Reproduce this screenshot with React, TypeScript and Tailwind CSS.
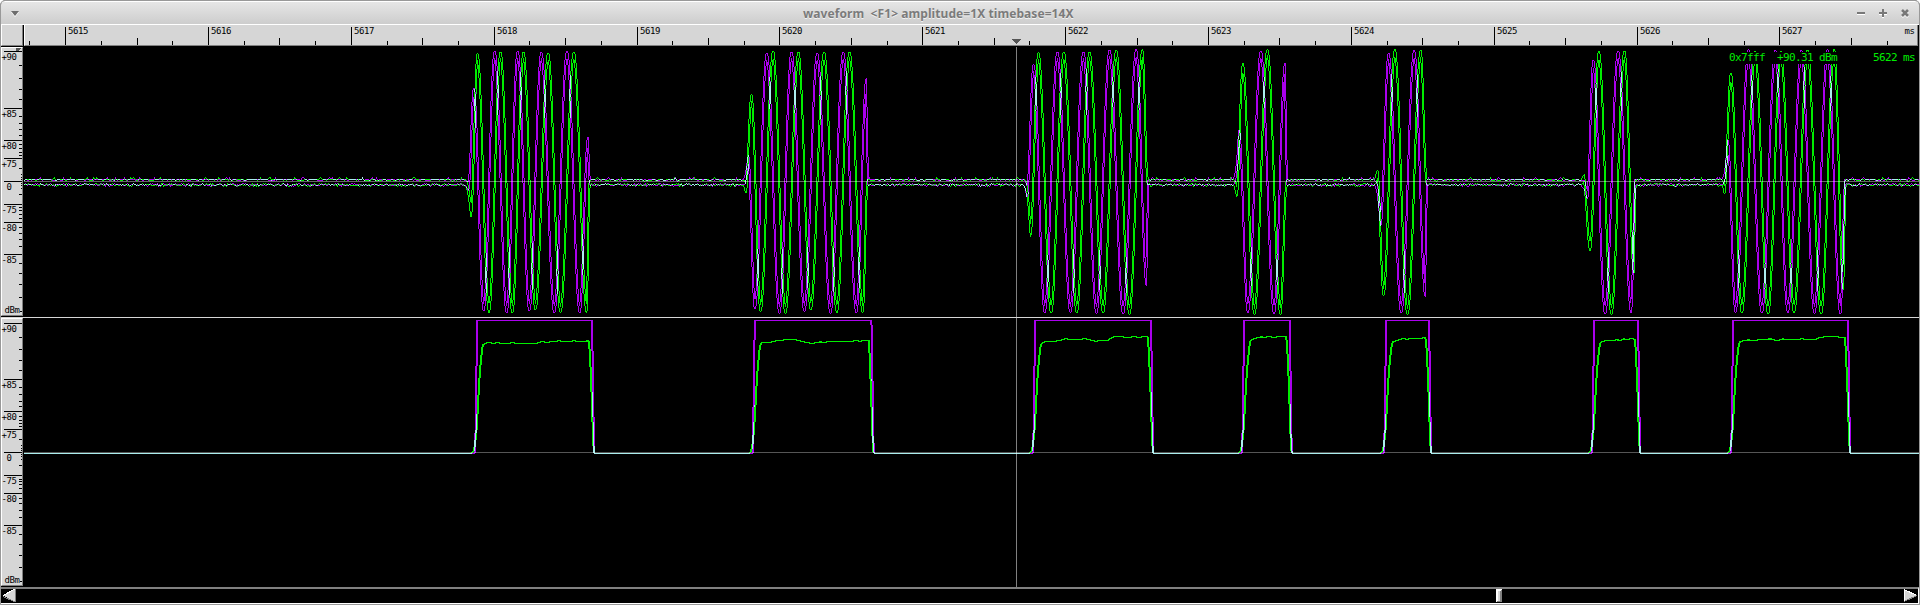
type Pt = [number, number];

const GREEN = '#00ee00';
const PURPLE = '#aa00ee';

interface Burst {
  start: number;
  end: number;
  purple: Pt[];
  green: Pt[];
}

// Turning points of both channels for each burst, in trace pixels.
const BURSTS: Burst[] = [
  {
    start: 463,
    end: 589.4,
    purple: [[468.5, 190], [473.7, 87.7], [483.7, 311], [494.7, 50.7], [506.7, 313], [517.7, 50.7], [529.3, 311], [541.3, 51.7], [554.3, 313], [567, 50.7], [579.7, 313], [588, 137]],
    green: [[471, 216.7], [477.5, 53.3], [489, 312.7], [500.5, 51.7], [512.3, 313], [523.5, 51.7], [535.4, 310], [548.2, 52.7], [560.5, 312.7], [573.8, 51.7], [586.7, 312.7]],
  },
  {
    start: 742,
    end: 867.5,
    purple: [[748.3, 155], [754.8, 309.3], [766.8, 52.7], [779.4, 313.3], [791.5, 51.7], [804.4, 311.7], [817.2, 52.7], [830.4, 313.3], [843.2, 51.7], [856.4, 313.3], [866.4, 78.3]],
    green: [[745.7, 193.3], [751.4, 94.3], [760.5, 311.7], [773.1, 50.7], [785.4, 313.3], [798.4, 51.7], [810.8, 310], [824.1, 51.7], [836.8, 312.7], [849.5, 51.7], [862.8, 312.7]],
  },
  {
    start: 1023,
    end: 1147.6,
    purple: [[1027, 196.7], [1033.5, 64.3], [1044.7, 312.7], [1057.4, 51.7], [1070.4, 312.7], [1083.4, 51.7], [1096.4, 313.3], [1109.5, 50], [1123.1, 314.3], [1136.2, 49.3], [1146.6, 286]],
    green: [[1030.4, 236.7], [1038.4, 52.3], [1051.1, 313.3], [1063.8, 51.7], [1076.8, 312.7], [1089.5, 51.7], [1103.1, 313.3], [1116.2, 50], [1129.4, 314.3], [1142.5, 49.3]],
  },
  {
    start: 1232,
    end: 1286.6,
    purple: [[1239, 130], [1247.8, 312.7], [1260.8, 50.7], [1274.1, 314], [1285.1, 63.3]],
    green: [[1236.7, 196.7], [1242.8, 63.3], [1254.4, 314.7], [1267.4, 49.3], [1280.5, 314.7]],
  },
  {
    start: 1373,
    end: 1426.5,
    purple: [[1380.6, 226], [1388.5, 52.7], [1401.2, 313.3], [1414.2, 50], [1425.4, 296.7]],
    green: [[1377.4, 170], [1383.5, 295.7], [1394.8, 49.3], [1407.5, 314.7], [1420.8, 50]],
  },
  {
    start: 1580,
    end: 1635.2,
    purple: [[1587.4, 199.3], [1593.2, 60], [1605.1, 314.3], [1618.1, 50.7], [1631.2, 312.7]],
    green: [[1583.4, 175], [1590.1, 250.7], [1598.8, 50.7], [1611.4, 314.3], [1624.5, 50.7], [1634, 273]],
  },
  {
    start: 1721,
    end: 1845.2,
    purple: [[1727.8, 140], [1735.4, 312.7], [1748.5, 49.3], [1761.8, 313.3], [1775.4, 50], [1787.8, 312.7], [1801.4, 50], [1814.4, 313.3], [1827.5, 49.3], [1840.5, 314.3]],
    green: [[1724.4, 194.3], [1730.8, 72.7], [1741.8, 313.3], [1755.1, 51], [1768.1, 314.3], [1780.8, 51], [1794.1, 312.7], [1807.5, 50], [1821.1, 314.3], [1834.2, 49.3], [1843.4, 290]],
  },
];

const X0 = 24;
const X1 = 1919;
const MID = 182;
const GAP = 2.4;

function prng(seed: number) {
  let s = seed;
  return () => {
    s = (s * 1664525 + 1013904223) % 4294967296;
    return s / 4294967296;
  };
}

function signal(channel: 'purple' | 'green') {
  const segs = BURSTS.map((b) => {
    const inner = b[channel].map(([x, y]): Pt => [x, y < MID ? y + GAP : y - GAP]);
    const pts: Pt[] = [[b.start, MID], ...inner, [b.end, MID]];
    return { start: b.start, end: b.end, pts };
  });
  return (x: number) => {
    for (const s of segs) {
      if (x < s.start || x > s.end) continue;
      for (let i = 1; i < s.pts.length; i++) {
        const [xa, ya] = s.pts[i - 1];
        const [xb, yb] = s.pts[i];
        if (x <= xb) {
          const t = (x - xa) / (xb - xa);
          return ya + (yb - ya) * (i === 1 ? t * t * t : (1 - Math.cos(Math.PI * t)) / 2);
        }
      }
    }
    return MID;
  };
}

// One-pixel columns joining consecutive samples, half of each step per column.
function columns(ys: number[], x0: number) {
  let d = '';
  for (let i = 0; i < ys.length; i++) {
    const y = ys[i];
    const a = i > 0 ? (ys[i - 1] + y) / 2 : y;
    const b = i < ys.length - 1 ? (ys[i + 1] + y) / 2 : y;
    const lo = Math.round(Math.min(y, a, b));
    const hi = Math.max(Math.round(Math.max(y, a, b)), lo + 1);
    d += `M${x0 + i} ${lo}h1V${hi}h-1z`;
  }
  return d;
}

function envelope(f: (x: number) => number, gap: number, seed: number) {
  const rnd = prng(seed);
  const noise = (y: number) => {
    const r = rnd();
    if (!gap || Math.abs(y - MID) > 6) return 0;
    if (r > 0.96) return 2.2;
    return r > 0.55 ? 1 : r < 0.12 ? -1 : 0;
  };
  const top: number[] = [];
  const bottom: number[] = [];
  for (let x = X0; x < X1; x++) {
    let lo = Infinity;
    let hi = -Infinity;
    for (let k = 0; k <= 8; k++) {
      const y = f(x + k / 8);
      lo = Math.min(lo, y);
      hi = Math.max(hi, y);
    }
    top.push(lo - gap - noise(lo));
    bottom.push(hi + gap + noise(hi));
  }
  return columns(top, X0) + (gap ? columns(bottom, X0) : columns(bottom, X0));
}

interface Gate {
  left: number;
  right: number;
  top: Pt[];
}

// Gate edges and the level profile (offset from the left edge, y).
const GATES: Gate[] = [
  { left: 476.5, right: 593, top: [[12, 342], [18, 343], [21, 342], [24, 343], [36, 342.4], [44, 343], [60, 343], [66, 341], [70, 342], [76, 341], [82, 340.4], [90, 341], [98, 340.4], [104, 341], [112, 340.4]] },
  { left: 754, right: 872.5, top: [[9, 342], [16, 342], [22, 340.5], [34, 339], [42, 339.4], [48, 341], [58, 343], [66, 341.4], [70, 342], [76, 341], [98, 341], [102, 340], [106, 341], [110, 340], [115, 340.5]] },
  { left: 1034.5, right: 1152, top: [[10, 341.5], [18, 341], [26, 340], [30, 338.4], [46, 339], [50, 338], [61, 341], [66, 340], [74, 339.8], [79, 336.4], [84, 336], [94, 337], [100, 336], [104, 337], [108, 336.4], [113, 335.5]] },
  { left: 1243.5, right: 1290.6, top: [[7, 340], [11, 338], [18, 336.4], [22, 337], [25, 336], [30, 337], [36, 336], [42, 336.4]] },
  { left: 1385.5, right: 1430, top: [[8, 341], [14, 339.5], [18, 338], [22, 339], [27, 337.6], [33, 338.4], [38, 337.4]] },
  { left: 1593.5, right: 1639, top: [[8, 341.4], [14, 340], [24, 339.4], [27, 340.4], [30, 338.4], [35, 339], [38, 338], [42, 339]] },
  { left: 1732.5, right: 1849, top: [[8, 341], [16, 339.4], [20, 340.4], [26, 339.4], [38, 338.4], [45, 340.4], [50, 338.4], [56, 339.4], [70, 338.4], [76, 339], [84, 338.6], [88, 337], [92, 336.4], [104, 336], [108, 337.4], [113, 337.4]] },
];

const BASE = 453;

function lerp(pts: Pt[], x: number) {
  for (let i = 1; i < pts.length; i++) {
    if (x <= pts[i][0]) {
      const [xa, ya] = pts[i - 1];
      const [xb, yb] = pts[i];
      return ya + ((yb - ya) * (x - xa)) / (xb - xa || 1);
    }
  }
  return pts[pts.length - 1][1];
}

const LEVEL: Pt[] = [[0, BASE]];
const GATE: Pt[] = [[0, BASE]];
for (const g of GATES) {
  const rise: Pt[] = [[-4.5, BASE], [-2.5, 450], [-1.2, 443], [0.6, 423], [1.7, 400], [2.8, 380], [4, 365], [5.2, 352], [6.2, 344.5]];
  const fall: Pt[] = [[-4.2, g.top[g.top.length - 1][1]], [-3.4, 347], [-2.3, 370], [-1.2, 400], [-0.4, 425], [0.2, 445], [0.6, BASE]];
  rise.forEach(([x, y]) => LEVEL.push([g.left + x, y]));
  g.top.forEach(([x, y]) => LEVEL.push([g.left + x, y]));
  fall.forEach(([x, y]) => LEVEL.push([g.right + x, y]));
  GATE.push([g.left - 0.9, BASE], [g.left + 0.4, 320], [g.right - 0.6, 320], [g.right + 0.7, BASE]);
}
LEVEL.push([2000, BASE]);
GATE.push([2000, BASE]);

const TRACES = [
  { color: PURPLE, d: envelope(signal('purple'), GAP, 11) + envelope((x) => lerp(GATE, x), 0, 1) },
  { color: GREEN, d: envelope(signal('green'), GAP, 77) + envelope((x) => lerp(LEVEL, x), 0, 1) },
];

const FIRST_TICK = 65.6;
const TICK_STEP = 142.86;
const TIMES = Array.from({ length: 13 }, (_, i) => 5615 + i);

interface Scale {
  top: number;
  height: number;
  major: [number, string][];
  minor: number[];
  dots: number[];
  unit: number;
}

const SCALES: Scale[] = [
  {
    top: 47,
    height: 270,
    major: [[51, '+90'], [108, '+85'], [140, '+80'], [158, '+75'], [181, '0'], [204, '-75'], [222, '-80'], [254, '-85']],
    minor: [65, 78, 89, 99, 116, 123, 129, 135, 144, 148, 152, 155, 168, 194, 207, 210, 214, 218, 227, 233, 239, 246, 263, 273, 284, 297],
    dots: [174, 177, 179, 183, 185, 188],
    unit: 311,
  },
  {
    top: 318,
    height: 269,
    major: [[323, '+90'], [379, '+85'], [411, '+80'], [429, '+75'], [452, '0'], [475, '-75'], [493, '-80'], [525, '-85']],
    minor: [337, 349, 360, 370, 387, 394, 401, 406, 416, 420, 423, 426, 439, 465, 479, 481, 484, 488, 498, 503, 510, 517, 534, 544, 555, 567],
    dots: [445, 448, 450, 454, 456, 459],
    unit: 581,
  },
];

function Gutter({ s }: { s: Scale }) {
  return (
    <div className="w-[22px] border border-l-white border-t-white border-r-[#808080] border-b-[#808080] bg-[#d6d6d6]" style={{ height: s.height - 1 }}>
      <svg width="20" height={s.height - 3} viewBox={`2 ${s.top + 1} 20 ${s.height - 3}`} shapeRendering="crispEdges" className="block overflow-visible">
        {s.top === 47 && <path d="M16 48h6l-5 4h-1z" fill="#555" />}
        {s.major.map(([y]) => (
          <rect key={y} x="4" y={y} width="18" height="1" />
        ))}
        {s.minor.map((y) => (
          <rect key={y} x="19" y={y} width="3" height="1" />
        ))}
        {s.dots.map((y) => (
          <rect key={y} x="21" y={y} width="1" height="1" />
        ))}
        <rect x="20" y={s.unit} width="2" height="1" />
        {s.major.map(([y, label]) => (
          <text key={y} x={label === '0' ? 6.5 : 1.5} y={y + 9} fontSize="9" letterSpacing="-0.42" className="font-['DejaVu_Sans_Mono',monospace]">
            {label}
          </text>
        ))}
        <text x="4.5" y={s.unit + 2} fontSize="9" letterSpacing="-0.42" className="font-['DejaVu_Sans_Mono',monospace]">
          dBm
        </text>
      </svg>
    </div>
  );
}

export default function App() {
  return (
    <div className="flex h-[605px] w-[1920px] flex-col overflow-hidden rounded-t-[5px] border border-[#999] bg-black">
      <header className="flex h-[23px] shrink-0 items-center border-t border-white bg-gradient-to-b from-[#e6e6e6] to-[#cdcdcd] px-[10px]">
        <svg width="8" height="6" viewBox="0 0 8 6" className="mt-0.5">
          <path d="M0 1h8L4 6z" fill="#fff" />
          <path d="M0 0h8L4 5z" fill="#6e6e6e" />
        </svg>
        <h1 className="ml-[784px] flex-1 whitespace-pre pt-px font-['Noto_Sans',sans-serif] text-[12px] font-bold leading-[20px] tracking-[0.07px] text-[#7b7b7b] [text-shadow:0_1px_0_#f2f2f2]">
          {'waveform  <F1> amplitude=1X timebase=14X'}
        </h1>
        <svg width="52" height="12" viewBox="0 0 52 12" fill="none" strokeWidth="2">
          <g stroke="#fff" transform="translate(0 1)">
            <path d="M0 6h8M22 6h8M26 2v8" />
            <path d="M45 3l6 6M51 3l-6 6" strokeWidth="2.6" />
          </g>
          <g stroke="#787878">
            <path d="M0 6h8M22 6h8M26 2v8" />
            <path d="M45 3l6 6M51 3l-6 6" strokeWidth="2.6" />
          </g>
        </svg>
      </header>

      <div className="flex h-[22px] shrink-0 border-t border-white">
        <div className="w-[22px] border-b border-l border-r border-b-[#808080] border-l-white border-r-[#808080] bg-[#d6d6d6]" />
        <div className="w-px bg-black" />
        <div className="w-[1894px] border-b border-l border-r border-b-[#808080] border-l-white border-r-[#808080] bg-[#d6d6d6]">
          <svg width="1892" height="20" viewBox="25 25 1892 20" shapeRendering="crispEdges" className="block">
            {Array.from({ length: 53 }, (_, i) => {
              const k = i - 1;
              const x = Math.floor(FIRST_TICK + (k * TICK_STEP) / 4);
              const y = k % 4 === 0 ? 27 : k % 2 === 0 ? 38 : 41;
              return <rect key={i} x={x} y={y} width="1" height={45 - y} />;
            })}
            {TIMES.map((n, i) => (
              <text key={n} x={Math.floor(FIRST_TICK + i * TICK_STEP) + 3} y="34" fontSize="9" letterSpacing="-0.42" className="font-['DejaVu_Sans_Mono',monospace]">
                {n}
              </text>
            ))}
            <text x="1904.5" y="34" fontSize="9" letterSpacing="-0.42" className="font-['DejaVu_Sans_Mono',monospace]">
              ms
            </text>
            <path d="M1012 39h9l-4 5h-1z" fill="#555" />
          </svg>
        </div>
      </div>

      <main className="relative flex h-[541px] shrink-0">
        <div className="flex w-[22px] flex-col pt-px">
          <Gutter s={SCALES[0]} />
          <div className="mt-px h-px bg-[#d6d6d6]" />
          <Gutter s={SCALES[1]} />
        </div>
        <svg width="1896" height="541" viewBox="23 46 1896 541" shapeRendering="crispEdges" className="isolate block">
          <rect x="23" y="46" width="1896" height="541" />
          {TRACES.map((t) => (
            <path key={t.color} d={t.d} fill={t.color} className="mix-blend-screen" />
          ))}
          <rect x="24" y="181" width="1895" height="1" fill="#666" className="mix-blend-screen" />
          <rect x="24" y="452" width="1895" height="1" fill="#555" className="mix-blend-screen" />
          <rect x="1016" y="47" width="1" height="540" fill="#808080" className="mix-blend-screen" />
          <rect x="23" y="317" width="1896" height="1" fill="#d6d6d6" />
        </svg>
        <div className="absolute right-0 top-[6px] h-[12px] w-[190px] whitespace-pre bg-black font-['DejaVu_Sans_Mono',monospace] text-[11px] leading-[12px] tracking-[-0.622px] text-[#00ee00]">
          {'0x7fff  +90.31 dBm      5622 ms'}
        </div>
      </main>

      <footer className="flex h-[17px] shrink-0 border-b border-r border-t-2 border-b-white border-r-white border-t-[#808080] bg-black pl-[2px]">
        <svg width="1915" height="14" viewBox="3 589 1915 14" shapeRendering="crispEdges" className="block">
          <path d="M15 589h1v13h-1z" fill="#808080" />
          <path d="M15 589v13L3 595.5z" fill="#d6d6d6" />
          <path d="M15 589L3 595.5" stroke="#fff" />
          <path d="M15 602L3 596.5" stroke="#808080" />
          <rect x="1496" y="589" width="6" height="13" fill="#808080" />
          <path d="M1496 589h6l-2 2h-1v9l-3 2z" fill="#fff" />
          <rect x="1498" y="591" width="2" height="10" fill="#d6d6d6" />
          <path d="M1904 589v13l13-6.5z" fill="#d6d6d6" />
          <path d="M1904.5 589v13M1904 589.5l13 6" stroke="#fff" />
          <path d="M1904 601.5l13-6" stroke="#808080" />
        </svg>
      </footer>
    </div>
  );
}
